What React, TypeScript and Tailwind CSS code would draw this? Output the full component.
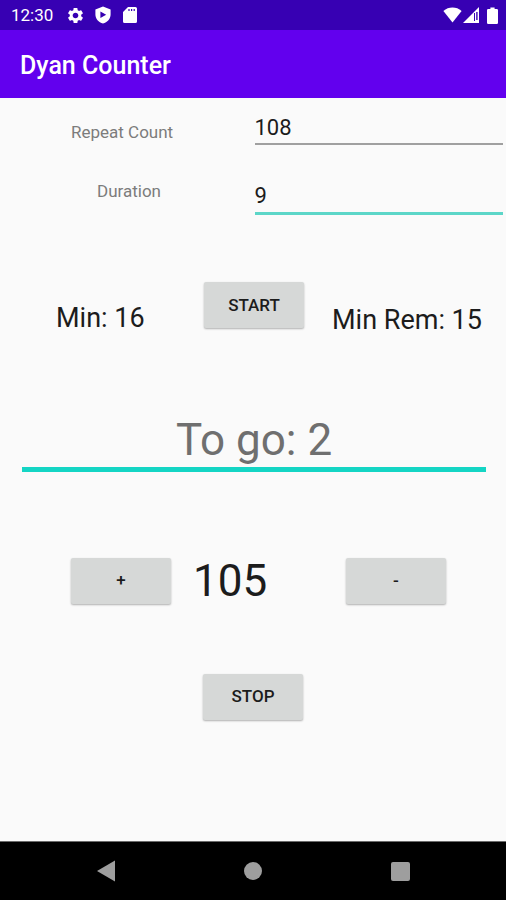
import { useState } from "react";
import { MdSettings } from "react-icons/md";

const buttonStyle =
  "h-[46px] w-[100px] rounded-xs bg-[#d6d8d7] text-[17px] font-medium text-[#1c1c1c] shadow-[0_1px_2px_rgba(0,0,0,0.3)]";

function StatusBar() {
  return (
    <div className="flex h-[30px] items-center justify-between bg-[#3700b3] pr-2 pl-[11px] text-white">
      <div className="flex items-center">
        <span className="text-[17px] leading-6">12:30</span>
        <MdSettings className="ml-[13px]" size={19} />
        <svg className="ml-[9px] h-[18px] w-[18px]" viewBox="0 0 18 18" fill="currentColor">
          <path
            fillRule="evenodd"
            d="M9 0.6 L16.6 3.4 V8.4 C16.6 12.8 13.4 16.2 9 17.6 C4.6 16.2 1.4 12.8 1.4 8.4 V3.4 Z M6.4 5.6 V12 L12.2 8.8 Z"
          />
        </svg>
        <svg className="ml-[10px] h-[18px] w-[16px]" viewBox="0 0 16 18" fill="currentColor">
          <path
            fillRule="evenodd"
            d="M6 1 H13.4 Q15 1 15 2.6 V15.4 Q15 17 13.4 17 H2.6 Q1 17 1 15.4 V6 Z M6.4 3 V5 H7.6 V3 Z M9 3 V5 H10.2 V3 Z M11.6 3 V5 H12.8 V3 Z"
          />
        </svg>
      </div>
      <div className="flex items-center">
        <svg className="h-4 w-[19px]" viewBox="0 0 19 16" fill="currentColor">
          <path d="M0.4 4 C5.6 -0.6 13.4 -0.6 18.6 4 L9.5 15.4 Z" />
        </svg>
        <svg className="ml-px h-4 w-4" viewBox="0 0 16 16" fill="currentColor">
          <path
            fillRule="evenodd"
            d="M16 0 V16 H0 Z M11 6 V14 H12 V6 Z M13.2 5 V13 H14.6 V5 Z"
          />
        </svg>
        <svg className="ml-2 h-[17px] w-[11px]" viewBox="0 0 11 17" fill="currentColor">
          <path d="M3.4 0.4 H7.6 V2 H9.8 Q11 2 11 3.2 V15.8 Q11 17 9.8 17 H1.2 Q0 17 0 15.8 V3.2 Q0 2 1.2 2 H3.4 Z" />
        </svg>
      </div>
    </div>
  );
}

function NavigationBar() {
  return (
    <nav className="flex h-[59px] border-t border-[#6b6b6b] bg-black px-8 text-[#9e9e9e]">
      <button aria-label="Back" className="flex flex-1 items-center justify-center">
        <svg className="h-[22px] w-[18px]" viewBox="0 0 18 22" fill="currentColor">
          <path d="M18 0.6 V21.4 L0 11 Z" />
        </svg>
      </button>
      <button aria-label="Home" className="flex flex-1 items-center justify-center">
        <span className="h-[18px] w-[18px] rounded-full bg-current" />
      </button>
      <button aria-label="Recent apps" className="flex flex-1 items-center justify-center">
        <span className="h-[19px] w-[19px] rounded-xs bg-current" />
      </button>
    </nav>
  );
}

export default function App() {
  const [repeatCount, setRepeatCount] = useState("108");
  const [duration, setDuration] = useState("9");
  const [toGo, setToGo] = useState("");
  const [count, setCount] = useState(105);

  return (
    <div className="flex min-h-screen flex-col bg-[#fafafa] font-[Roboto,sans-serif] text-[#1c1c1c]">
      <StatusBar />
      <header className="flex h-[68px] items-center bg-[#6200ee] px-5 pt-[3px]">
        <h1 className="text-[25px] font-medium text-white">Dyan Counter</h1>
      </header>

      <main className="flex-1">
        <div className="flex items-end pt-[13px] pr-[3px]">
          <label
            htmlFor="repeat"
            className="mb-0.5 w-1/2 pl-[71px] text-[17px] leading-[22px] text-[#7c7c7c]"
          >
            Repeat Count
          </label>
          <input
            id="repeat"
            className="ml-[3px] h-[34px] min-w-0 flex-1 border-b-2 border-[#a0a0a0] text-[22px] outline-none"
            value={repeatCount}
            onChange={(e) => setRepeatCount(e.target.value)}
          />
        </div>
        <div className="mt-[34px] flex items-start pr-[3px]">
          <label
            htmlFor="duration"
            className="mt-px w-1/2 pl-[97px] text-[17px] leading-[22px] text-[#7c7c7c]"
          >
            Duration
          </label>
          <input
            id="duration"
            className="ml-[3px] h-9 min-w-0 flex-1 border-b-3 border-[#5cd6c8] text-[22px] outline-none"
            value={duration}
            onChange={(e) => setDuration(e.target.value)}
          />
        </div>

        <div className="mt-[67px] grid grid-cols-[1fr_auto_1fr] items-start pl-0.5 text-[27px] leading-8">
          <p className="mt-5 pl-[54px] whitespace-nowrap">Min: 16</p>
          <button className={buttonStyle}>START</button>
          <p className="mt-[22px] pl-7 whitespace-nowrap">Min Rem: 15</p>
        </div>

        <div className="mt-[77px] pr-5 pl-[22px]">
          <input
            aria-label="To go"
            className="h-[59px] w-full border-b-5 border-[#14d5c4] text-center text-[44px] outline-none placeholder:text-[#6f6f6f]"
            placeholder="To go: 2"
            value={toGo}
            onChange={(e) => setToGo(e.target.value)}
          />
        </div>

        <div className="mt-[86px] flex items-center pr-[60px] pl-[71px]">
          <button className={buttonStyle} onClick={() => setCount(count + 1)}>
            +
          </button>
          <output className="ml-[22px] text-[44px] leading-[46px]">{count}</output>
          <button className={`${buttonStyle} ml-auto`} onClick={() => setCount(count - 1)}>
            -
          </button>
        </div>

        <div className="mt-[70px] flex justify-center">
          <button className={buttonStyle}>STOP</button>
        </div>
      </main>

      <NavigationBar />
    </div>
  );
}
